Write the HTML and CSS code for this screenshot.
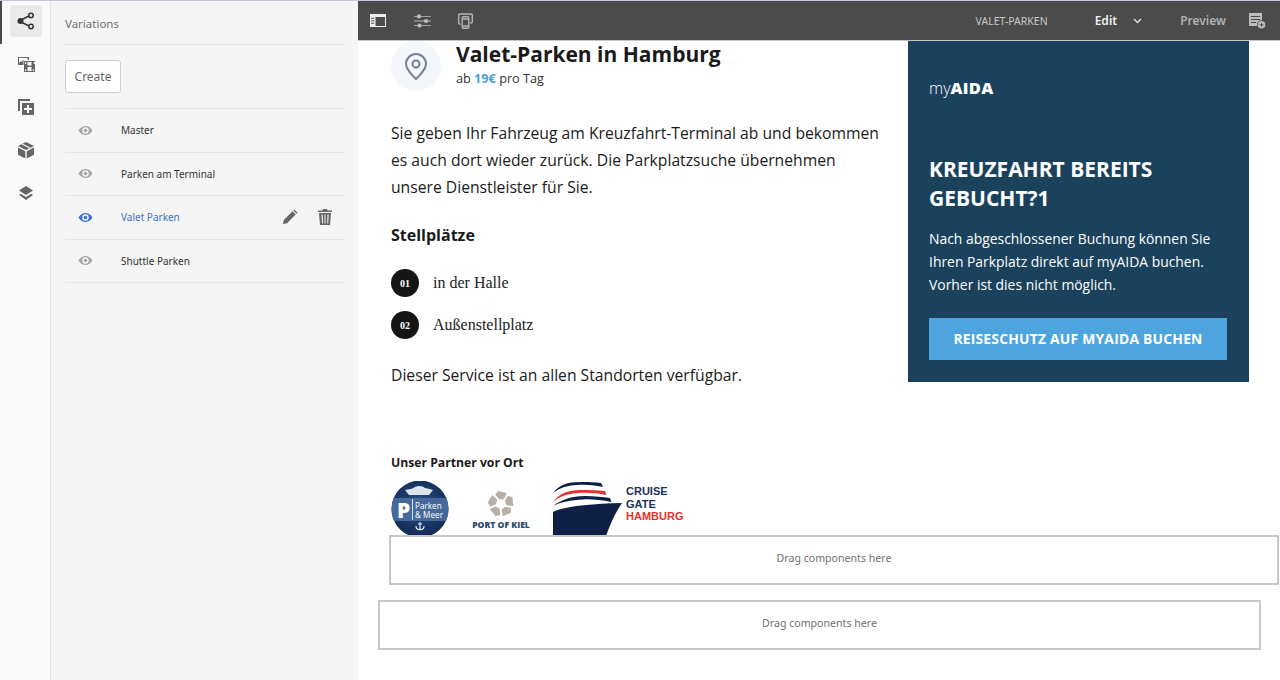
FILE: index.html
```html
<!DOCTYPE html>
<html lang="de">
<head>
    <meta charset="UTF-8">
    <title>Variations - Valet-Parken</title>
    <link rel="stylesheet" href="styles.css">
</head>
<body>
    <div class="app">
        <nav class="rail">
            <div class="rail-btn active">
                <svg width="18" height="18" viewBox="0 0 18 18"><circle cx="3.500" cy="9" r="3" fill="#333"/><circle cx="14" cy="3.500" r="2.200" fill="none" stroke="#333" stroke-width="1.500"/><circle cx="14" cy="14.500" r="2.200" fill="none" stroke="#333" stroke-width="1.500"/><path d="M4 8 12 4M4 10l8 4" stroke="#333" stroke-width="1.500"/></svg>
            </div>
            <div class="rail-btn">
                <svg width="18" height="15" viewBox="0 0 18 15" fill="#666"><path d="M1 0h11v3H6.500v5H1zM2 1v5l2-2 1.500 1V3h5V1z" fill-rule="evenodd"/><path d="M7 4h11v11H7zM8 5v2h1.200V5zm8.800 0v2H18V5zM8 12.500v1.500h1.200v-1.500zm7.800 0v1.500H17v-1.500zM10.500 5v3.500h4V5zm0 5v4h4v-4z" fill-rule="evenodd"/></svg>
            </div>
            <div class="rail-btn">
                <svg width="18" height="18" viewBox="0 0 18 18" fill="#666"><path d="M1 1h12v2H3v10H1z"/><path d="M5 5h12v12H5zm5 2v3H7v2h3v3h2v-3h3v-2h-3V7z" fill-rule="evenodd"/></svg>
            </div>
            <div class="rail-btn">
                <svg width="18" height="18" viewBox="0 0 18 18"><path d="M9 1l8 4-8 4-8-4z" fill="#666"/><path d="M5 3l8 4" stroke="#fafafa" stroke-width="1.100"/><path d="M1 6.600l7.300 3.600V17.500L1 13.800zM17 6.600l-7.300 3.600V17.500L17 13.800z" fill="#666"/></svg>
            </div>
            <div class="rail-btn">
                <svg width="18" height="18" viewBox="0 0 18 18" fill="#666"><path d="M9 2l7 4.500L9 11 2 6.500z"/><path d="M3.800 9.700 9 13l5.200-3.300L16 11l-7 5-7-5z"/></svg>
            </div>
        </nav>

        <aside class="panel">
            <div class="panel-title">Variations</div>
            <div class="panel-action">
                <button class="create-btn" type="button">Create</button>
            </div>
            <ul class="variation-list">
                <li class="variation">
                    <svg class="eye" width="15" height="11" viewBox="0 0 15 11"><path d="M.5 5.500C2.500 2 5 1 7.500 1s5 1 7 4.500c-2 3.500-4.500 4.500-7 4.500s-5-1-7-4.500zM7.500 2.300a3.200 3.200 0 1 0 0 6.400 3.200 3.200 0 0 0 0-6.400z" fill="currentColor" fill-rule="evenodd"/><circle cx="7.500" cy="5.500" r="1.800" fill="currentColor"/></svg>
                    <span>Master</span>
                </li>
                <li class="variation">
                    <svg class="eye" width="15" height="11" viewBox="0 0 15 11"><path d="M.5 5.500C2.500 2 5 1 7.500 1s5 1 7 4.500c-2 3.500-4.500 4.500-7 4.500s-5-1-7-4.500zM7.500 2.300a3.200 3.200 0 1 0 0 6.400 3.200 3.200 0 0 0 0-6.400z" fill="currentColor" fill-rule="evenodd"/><circle cx="7.500" cy="5.500" r="1.800" fill="currentColor"/></svg>
                    <span>Parken am Terminal</span>
                </li>
                <li class="variation selected">
                    <svg class="eye" width="15" height="11" viewBox="0 0 15 11"><path d="M.5 5.500C2.500 2 5 1 7.500 1s5 1 7 4.500c-2 3.500-4.500 4.500-7 4.500s-5-1-7-4.500zM7.500 2.300a3.200 3.200 0 1 0 0 6.400 3.200 3.200 0 0 0 0-6.400z" fill="currentColor" fill-rule="evenodd"/><circle cx="7.500" cy="5.500" r="1.800" fill="currentColor"/></svg>
                    <span>Valet Parken</span>
                    <div class="row-tools">
                        <svg width="16" height="16" viewBox="0 0 16 16" fill="#666"><path d="M1 15l.8-4L10.500 2.300l3.200 3.200L5 14.200zM11.300 1.500l1-1 3.200 3.200-1 1z"/></svg>
                        <svg width="14" height="16" viewBox="0 0 14 16" fill="#666"><path d="M5 0h4l.5 1.500H14V3H0V1.500h4.500zM1 4h12l-1 12H2zm2.500 1.500.5 9h1l-.3-9zm3 0v9h1v-9zm3 0-.3 9h1l.5-9z" fill-rule="evenodd"/></svg>
                    </div>
                </li>
                <li class="variation">
                    <svg class="eye" width="15" height="11" viewBox="0 0 15 11"><path d="M.5 5.500C2.500 2 5 1 7.500 1s5 1 7 4.500c-2 3.500-4.500 4.500-7 4.500s-5-1-7-4.500zM7.500 2.300a3.200 3.200 0 1 0 0 6.400 3.200 3.200 0 0 0 0-6.400z" fill="currentColor" fill-rule="evenodd"/><circle cx="7.500" cy="5.500" r="1.800" fill="currentColor"/></svg>
                    <span>Shuttle Parken</span>
                </li>
            </ul>
        </aside>

        <main class="main">
            <header class="toolbar">
                <div class="tool-group">
                    <svg width="16" height="13" viewBox="0 0 16 13"><path d="M0 0h16v13H0zM5.500 3v9H15V3z" fill="#eee" fill-rule="evenodd"/><path d="M1 3.800h3.200v1H1zm0 2.500h3.200v1H1zm0 2.500h3.200v1H1z" fill="#4b4b4b"/></svg>
                    <svg width="17" height="14" viewBox="0 0 17 14" fill="#bbb"><path d="M0 2h17v.8H0zM0 6.600h17v.8H0zM0 11.200h17v.8H0z"/><circle cx="5" cy="2.400" r="2.100"/><circle cx="12" cy="7" r="2.100"/><circle cx="5.500" cy="11.600" r="2.100"/></svg>
                    <svg class="device" width="16" height="16" viewBox="0 0 16 16" fill="none" stroke="#b4b4b4" stroke-width="1.400"><path d="M2.500 11H1.700a1 1 0 0 1-1-1V2a1 1 0 0 1 1-1h11.600a1 1 0 0 1 1 1v7a1 1 0 0 1-1 1h-1"/><rect x="4.200" y="3.700" width="6.600" height="11.600" rx="1.200"/><path d="M5 6h5M5 13h5"/></svg>
                </div>
                <div class="tool-right">
                    <span class="page-name">VALET-PARKEN</span>
                    <span class="mode">Edit</span>
                    <svg class="chevron" width="9" height="6" viewBox="0 0 9 6" fill="none" stroke="#ddd" stroke-width="1.500"><path d="M1 1l3.500 3.500L8 1"/></svg>
                    <span class="preview">Preview</span>
                    <svg width="17" height="16" viewBox="0 0 17 16" fill="#bbb"><path d="M0 0h13v7a5 5 0 0 0-5 6H0zm2 3v1h9V3zm0 3v1h9V6zm0 3v1h5V9z" fill-rule="evenodd"/><path d="M12.500 8a3.800 3.800 0 1 0 0 7.600 3.800 3.800 0 0 0 0-7.600zM12 10h1v1.300h1.300v1H13v1.300h-1v-1.300h-1.300v-1H12z" fill-rule="evenodd"/></svg>
                </div>
            </header>

            <div class="page">
                <div class="columns">
                    <section class="content">
                        <div class="offer">
                            <div class="pin">
                                <svg width="22" height="27" viewBox="0 0 22 27" fill="none" stroke="#75809a" stroke-width="2"><path d="M11 1a10 10 0 0 1 10 10c0 5-5 10-10 15C6 21 1 16 1 11A10 10 0 0 1 11 1z"/><circle cx="11" cy="11" r="3.500"/></svg>
                            </div>
                            <div class="offer-text">
                                <h1>Valet-Parken in Hamburg</h1>
                                <p class="price">ab <b>19€</b> pro Tag</p>
                            </div>
                        </div>
                        <p class="lead">Sie geben Ihr Fahrzeug am Kreuzfahrt-Terminal ab und bekommen es auch dort wieder zurück. Die Parkplatzsuche übernehmen unsere Dienstleister für Sie.</p>
                        <h2>Stellplätze</h2>
                        <div class="spot"><span class="num">01</span><span>in der Halle</span></div>
                        <div class="spot"><span class="num">02</span><span>Außenstellplatz</span></div>
                        <p class="note">Dieser Service ist an allen Standorten verfügbar.</p>
                    </section>
                    <section class="promo">
                        <div class="promo-logo">my<b>AIDA</b></div>
                        <h3>KREUZFAHRT BEREITS GEBUCHT?1</h3>
                        <p>Nach abgeschlossener Buchung können Sie Ihren Parkplatz direkt auf myAIDA buchen. Vorher ist dies nicht möglich.</p>
                        <a class="promo-btn">REISESCHUTZ AUF MYAIDA BUCHEN</a>
                    </section>
                </div>

                <h4 class="partner-title">Unser Partner vor Ort</h4>
                <div class="partners">
                    <svg class="logo-pm" width="58" height="55" viewBox="0 0 58 55">
                        <defs>
                            <radialGradient id="pm-ball" cx="50%" cy="45%" r="55%">
                                <stop offset="0" stop-color="#2a5286"/>
                                <stop offset="1" stop-color="#142c57"/>
                            </radialGradient>
                            <clipPath id="pm-clip"><circle cx="29" cy="28" r="28.500"/></clipPath>
                        </defs>
                        <g clip-path="url(#pm-clip)">
                            <rect width="58" height="55" fill="url(#pm-ball)"/>
                            <path d="M14 9c4-1 8-1 10-3 4-2 8-1 10 1 3 1 6 1 8 2l-4 5H18z" fill="#dfe5ee"/>
                            <rect x="0" y="17" width="58" height="23" fill="#44699a"/>
                            <rect x="21" y="18" width="1" height="21" fill="#d5dde9"/>
                            <text x="6" y="37" class="pm-p">P</text>
                            <text x="24" y="28" class="pm-text">Parken</text>
                            <text x="24" y="37" class="pm-text">&amp; Meer</text>
                            <path d="M29 41v8M25 45c0 5 8 5 8 0M27 43h4" stroke="#e6ebf2" stroke-width="1.200" fill="none"/>
                        </g>
                    </svg>
                    <div class="logo-kiel">
                        <svg width="28" height="26" viewBox="-14 -13.500 28 27" fill="#b9b0a5">
                            <path id="kiel-leaf" d="M-3 -13.500 6 -11.500 3 -5H-2L-6 -9.500z"/>
                            <use href="#kiel-leaf" transform="rotate(72)"/>
                            <use href="#kiel-leaf" transform="rotate(144)"/>
                            <use href="#kiel-leaf" transform="rotate(216)"/>
                            <use href="#kiel-leaf" transform="rotate(288)"/>
                        </svg>
                        <span>PORT OF KIEL</span>
                    </div>
                    <div class="logo-cruise">
                        <svg width="70" height="55" viewBox="0 0 70 55">
                            <path d="M0 12C6 4 14 1 28 1c8 0 15 0 20 1l2 4C40 4 32 3.500 24 4 14 4.500 6 7 0 12z" fill="#0e2045"/>
                            <path d="M0 21C6 13 14 9 28 9c9 0 17 0 24 1l1.500 4C44 12 34 11.500 26 12 14 12.500 6 16 0 21z" fill="#e2332e"/>
                            <path d="M0 25C8 19 18 15 32 15c10 0 18 1 25 2l1.500 4C48 19 38 18 30 18.500 18 19 8 21 0 25z" fill="#0e2045"/>
                            <path d="M0 31C12 25 36 23 69 22 62 32 57 44 53 55H0z" fill="#0e2045"/>
                        </svg>
                        <div class="cruise-text">CRUISE<br>GATE<br><em>HAMBURG</em></div>
                    </div>
                </div>

                <div class="dropzone first">Drag components here</div>
                <div class="dropzone second">Drag components here</div>
            </div>
        </main>
    </div>
</body>
</html>
```

FILE: styles.css
```css
* {
    box-sizing: border-box;
}
html, body {
    margin: 0;
    height: 100%;
    overflow: hidden;
}
body {
    font-family: "Open Sans", sans-serif;
    background: #fff;
    color: #1a1a1a;
}
.app {
    display: flex;
    height: 680px;
    border-top: 1px solid #c9c6dc;
}

/* left rail */
.rail {
    width: 51px;
    flex: none;
    background: #fafafa;
    border-right: 1px solid #e4e4e4;
    padding: 4px 0 0 2px;
    display: flex;
    flex-direction: column;
    align-items: center;
    gap: 11px;
    position: relative;
}
.rail::before {
    content: "";
    position: absolute;
    left: 0;
    top: 0;
    width: 2px;
    height: 43px;
    background: #4b4b4b;
}
.rail-btn {
    width: 32px;
    height: 32px;
    border-radius: 4px;
    display: flex;
    align-items: center;
    justify-content: center;
}
.rail-btn.active {
    background: #eaeaea;
}

/* variations panel */
.panel {
    width: 307px;
    flex: none;
    background: #f5f5f5;
    padding: 0 14px;
    font-family: "Noto Sans", sans-serif;
}
.panel-title {
    height: 44px;
    line-height: 45px;
    font-size: 11.500px;
    color: #707070;
    border-bottom: 1px solid #e2e2e2;
}
.panel-action {
    height: 64px;
    padding-top: 15px;
    border-bottom: 1px solid #e6e6e6;
}
.create-btn {
    display: block;
    width: 56px;
    height: 33px;
    padding: 0;
    background: #fff;
    border: 1px solid #d0d0d0;
    border-radius: 3px;
    font: 12px "Noto Sans", sans-serif;
    color: #666;
}
.variation-list {
    list-style: none;
    margin: 0;
    padding: 0;
}
.variation {
    height: 43.500px;
    display: flex;
    align-items: center;
    padding-left: 13px;
    border-bottom: 1px solid #e6e6e6;
    font-size: 10px;
    color: #333;
}
.variation .eye {
    color: #a8a8a8;
    margin-right: 28px;
}
.variation.selected {
    color: #3f73cf;
}
.variation.selected .eye {
    color: #3f73cf;
}
.row-tools {
    margin-left: auto;
    margin-right: 12px;
    display: flex;
    align-items: center;
    gap: 20px;
}

/* toolbar */
.main {
    flex: 1;
    min-width: 0;
    overflow: hidden;
}
.toolbar {
    height: 40px;
    background: #4b4b4b;
    border-bottom: 1px solid #c4c4c4;
    display: flex;
    align-items: center;
    justify-content: space-between;
    padding: 0 14px 0 12px;
    font-family: "Noto Sans", sans-serif;
}
.tool-group {
    display: flex;
    align-items: center;
    gap: 28px;
}
.tool-group .device {
    margin-left: -1px;
}
.tool-right {
    display: flex;
    align-items: center;
}
.page-name {
    font-size: 10.500px;
    color: #c8c8c8;
    margin-right: 47px;
}
.mode {
    font-size: 12px;
    font-weight: 600;
    color: #eee;
}
.chevron {
    margin: 0 38px 0 16px;
}
.preview {
    font-size: 12px;
    font-weight: 600;
    color: #b0b0b0;
    margin-right: 23px;
}

/* page content */
.page {
    height: 639px;
    padding-left: 33px;
}
.columns {
    display: flex;
    height: 341px;
}
.content {
    width: 517px;
    flex: none;
}
.offer {
    display: flex;
    gap: 15px;
}
.offer-text {
    margin-top: -1px;
}
.pin {
    width: 50px;
    height: 50px;
    border-radius: 50%;
    background: #f3f6fb;
    display: flex;
    align-items: center;
    justify-content: center;
    flex: none;
}
h1 {
    margin: 0;
    font-size: 21px;
    font-weight: 700;
    line-height: 28px;
}
.price {
    margin: 2px 0 0;
    font-size: 12.700px;
    line-height: 17px;
    color: #333;
}
.price b {
    color: #4aa3df;
    font-weight: 700;
}
.lead {
    margin: 29px 0 0;
    font-size: 15.700px;
    line-height: 27px;
    width: 495px;
}
h2 {
    margin: 23px 0 0;
    font-size: 16px;
    font-weight: 700;
    line-height: 22px;
}
.spot {
    display: flex;
    align-items: center;
    gap: 14px;
    height: 28px;
    margin-top: 14px;
    font-family: "Liberation Serif", serif;
    font-size: 16px;
    color: #222;
}
h2 + .spot {
    margin-top: 23px;
}
.num {
    width: 28px;
    height: 28px;
    border-radius: 50%;
    background: #151515;
    color: #fff;
    font-size: 10px;
    font-weight: 700;
    display: flex;
    align-items: center;
    justify-content: center;
}
.note {
    margin: 24px 0 0;
    font-size: 15.700px;
    line-height: 24px;
}

/* promo card */
.promo {
    width: 341px;
    height: 341px;
    background: #1b425d;
    color: #fff;
    padding: 37px 22px 0 21px;
}
.promo-logo {
    font-size: 16px;
    font-weight: 300;
    line-height: 20px;
}
.promo-logo b {
    font-weight: 800;
    font-size: 16.500px;
    letter-spacing: .3px;
}
.promo h3 {
    margin: 57px 0 0;
    font-size: 21px;
    font-weight: 700;
    line-height: 29px;
}
.promo p {
    margin: 14px 0 0;
    font-size: 13.900px;
    line-height: 23px;
}
.promo-btn {
    display: block;
    margin-top: 22px;
    height: 42px;
    line-height: 42px;
    background: #4ea5de;
    text-align: center;
    font-size: 13.900px;
    font-weight: 700;
    letter-spacing: .2px;
}

/* partners */
.partner-title {
    margin: 72px 0 0;
    font-size: 12.200px;
    font-weight: 700;
    line-height: 17px;
}
.partners {
    display: flex;
    align-items: flex-start;
    height: 54px;
    margin-top: 10px;
    overflow: hidden;
}
.pm-text {
    font-size: 8.200px;
    fill: #fff;
}
.pm-p {
    font-size: 21px;
    font-weight: 800;
    fill: #fff;
}
.logo-kiel {
    margin-left: 23px;
    width: 58px;
    padding-top: 10px;
    display: flex;
    flex-direction: column;
    align-items: center;
}
.logo-kiel span {
    font-size: 8.600px;
    font-weight: 800;
    line-height: 12px;
    color: #2f4d70;
    white-space: nowrap;
    margin-top: 2px;
}
.logo-cruise {
    margin-left: 23px;
    display: flex;
}
.cruise-text {
    margin: 4px 0 0 3px;
    font-family: "Liberation Sans", sans-serif;
    font-size: 11px;
    font-weight: 700;
    line-height: 12.500px;
    color: #17305c;
}
.cruise-text em {
    font-style: normal;
    color: #e2332e;
}

/* drop targets */
.dropzone {
    height: 50px;
    border: 2px solid #c8c8c8;
    padding-bottom: 4px;
    display: flex;
    align-items: center;
    justify-content: center;
    font-family: "Noto Sans", sans-serif;
    font-size: 10.600px;
    color: #707070;
    background: #fff;
}
.dropzone.first {
    width: 890px;
    margin-left: -2px;
}
.dropzone.second {
    width: 883px;
    margin: 15px 0 0 -13px;
}
```
